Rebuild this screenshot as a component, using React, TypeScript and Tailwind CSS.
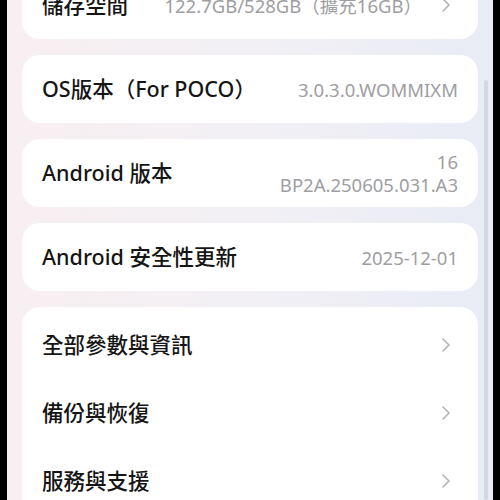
import { ChevronRight } from "lucide-react";

const font = {
  fontFamily: '"Noto Sans", "Noto Sans CJK TC", sans-serif',
};

function Chevron() {
  return <ChevronRight className="h-6 w-6 text-[#b4b4b8]" strokeWidth={1.6} />;
}

function Row({
  label,
  value,
  chevron,
  h = "h-[68px]",
}: {
  label: string;
  value?: React.ReactNode;
  chevron?: boolean;
  h?: string;
}) {
  return (
    <div className={`flex items-center justify-between pl-5 pr-5 ${h}`}>
      <span className="text-[21.5px] font-medium text-[#151515]">{label}</span>
      <div className="flex items-center gap-3">
        {value && (
          <div className="text-right text-[18.5px] leading-[23px] text-[#9e9ea2]">
            {value}
          </div>
        )}
        {chevron && <Chevron />}
      </div>
    </div>
  );
}

export default function App() {
  return (
    <div
      className="relative flex h-[500px] w-[500px] overflow-hidden bg-black px-[7px]"
      style={font}
    >
      <div className="flex-1 overflow-hidden bg-gradient-to-r from-[#f8eff1] via-[#f2f0f5] to-[#e9ecf5] px-[15px]">
        <div className="-mt-[23px] flex flex-col gap-[16px]">
          <div className="rounded-[18px] bg-white pb-[6px]">
            <Row
              label="儲存空間"
              value="122.7GB/528GB（擴充16GB）"
              chevron
              h="h-[56px]"
            />
          </div>
          <div className="rounded-[18px] bg-white">
            <Row label="OS版本（For POCO）" value="3.0.3.0.WOMMIXM" />
          </div>
          <div className="rounded-[18px] bg-white">
            <Row
              label="Android 版本"
              value={
                <>
                  <div>16</div>
                  <div>BP2A.250605.031.A3</div>
                </>
              }
            />
          </div>
          <div className="rounded-[18px] bg-white">
            <Row label="Android 安全性更新" value="2025-12-01" />
          </div>
          <div className="flex flex-col rounded-[18px] bg-white py-[4px]">
            <Row label="全部參數與資訊" chevron />
            <Row label="備份與恢復" chevron />
            <Row label="服務與支援" chevron />
          </div>
        </div>
      </div>
      <div className="absolute right-[12px] top-[80px] h-[420px] w-[4px] rounded-full bg-[#d4d8e3]" />
    </div>
  );
}
